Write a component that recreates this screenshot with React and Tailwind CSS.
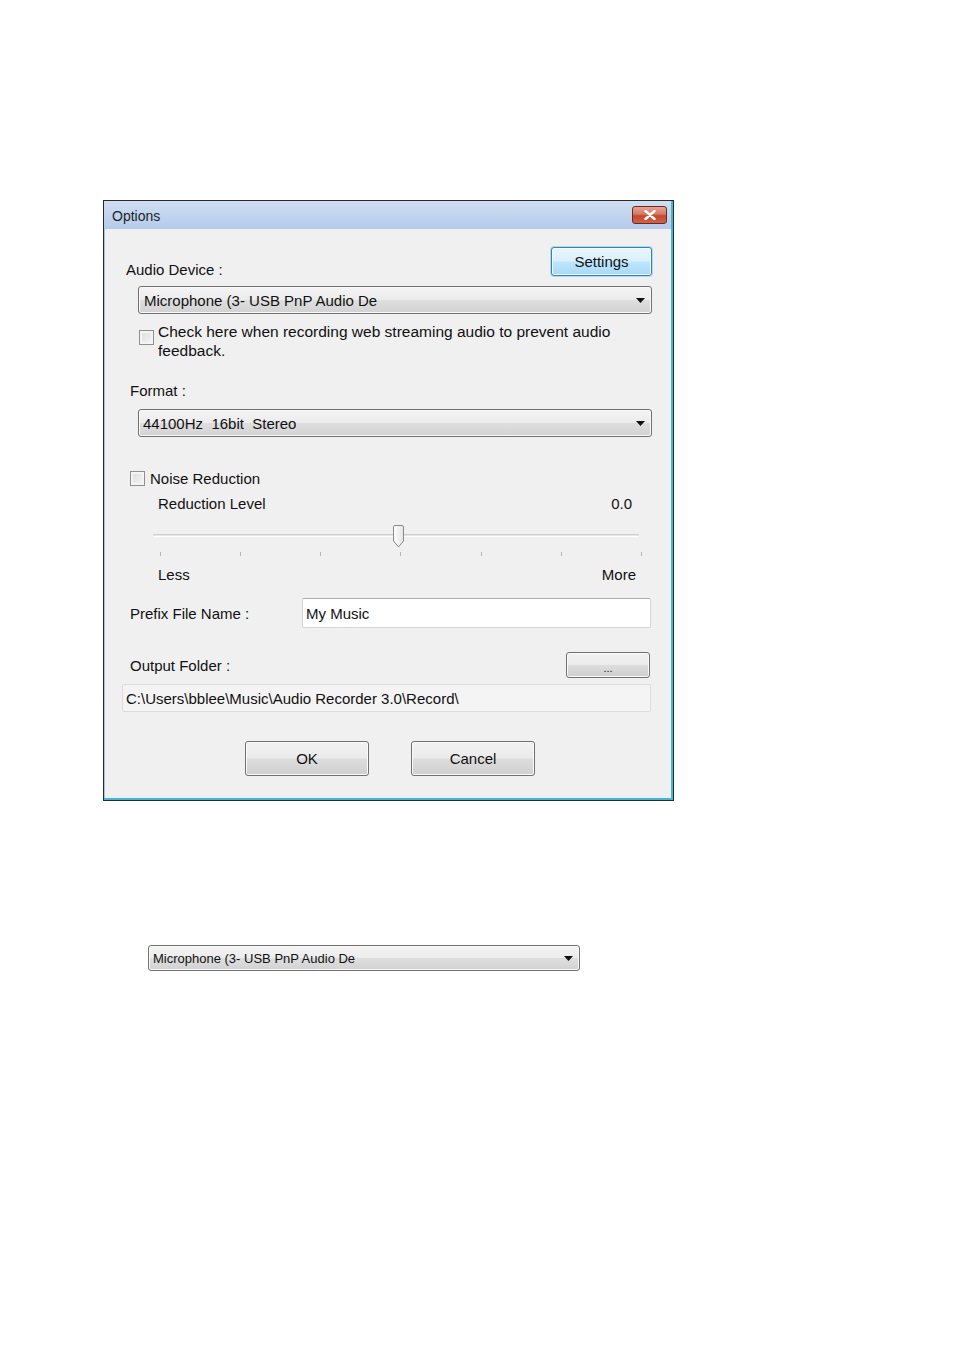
import React from "react";

const font = { fontFamily: '"Liberation Sans", Arial, sans-serif' };

function Arrow() {
  return (
    <svg width="9" height="5" viewBox="0 0 9 5" className="shrink-0">
      <path d="M0 0 H9 L4.5 5 Z" fill="#111" />
    </svg>
  );
}

function Combo({ text, className = "" }) {
  return (
    <div
      className={`flex items-center justify-between border border-[#707070] rounded-[3px] bg-[linear-gradient(to_bottom,#f4f4f4_0%,#ececec_48%,#dedede_52%,#d2d2d2_100%)] shadow-[inset_0_0_0_1px_#fafafa] ${className}`}
    >
      <span className="overflow-hidden whitespace-pre text-[#111]">{text}</span>
      <Arrow />
    </div>
  );
}

function Checkbox({ className = "" }) {
  return (
    <div className={`w-[15px] h-[15px] shrink-0 border border-[#8e8f8f] bg-[linear-gradient(135deg,#dcdcdc,#f6f6f6)] shadow-[inset_0_0_0_2px_#f4f4f4] ${className}`} />
  );
}

function Button({ children, className = "" }) {
  return (
    <div
      className={`flex items-center justify-center border border-[#707070] rounded-[3px] bg-[linear-gradient(to_bottom,#f2f2f2_0%,#ebebeb_48%,#dddddd_52%,#cfcfcf_100%)] shadow-[inset_0_0_0_1px_#fbfbfb] text-[#111] ${className}`}
    >
      {children}
    </div>
  );
}

function Thumb() {
  return (
    <svg width="13" height="23" viewBox="0 0 13 23">
      <defs>
        <linearGradient id="tg" x1="0" y1="0" x2="1" y2="0">
          <stop offset="0" stopColor="#ffffff" />
          <stop offset="1" stopColor="#e4e4e4" />
        </linearGradient>
      </defs>
      <path d="M1.5 2 Q1.5 0.5 3 0.5 H10 Q11.5 0.5 11.5 2 V16 L6.5 22 L1.5 16 Z" fill="url(#tg)" stroke="#8a8a8a" strokeWidth="1" />
    </svg>
  );
}

export default function App() {
  const ticks = [0, 1, 2, 3, 4, 5, 6];
  return (
    <div className="min-h-[1350px] w-[954px] bg-white text-[15px] leading-[19px]" style={font}>
      <div className="pt-[200px] pl-[103px]">
        {/* Window */}
        <div className="w-[571px] border border-[#2a2a2a] bg-[#a9c2e2]">
          <div className="border-r-2 border-b-2 border-[#40b5d8]">
            {/* Title bar */}
            <div className="h-[28px] flex items-center justify-between pl-[8px] pr-[4px] bg-[linear-gradient(to_bottom,#cfdff2,#b3cbea)]">
              <span className="pt-[2px] text-[14px] text-[#1e1e1e]">Options</span>
              <div className="w-[35px] h-[18px] rounded-[3px] border border-[#6b2a20] bg-[linear-gradient(to_bottom,#e8a394_0%,#d47862_45%,#c4472c_55%,#d0624a_100%)] flex items-center justify-center">
                <svg width="12" height="10" viewBox="0 0 12 10">
                  <path d="M1.5 1 L10.5 9 M10.5 1 L1.5 9" stroke="#ffffff" strokeWidth="2.4" strokeLinecap="round" />
                </svg>
              </div>
            </div>

            {/* Client */}
            <div className="bg-[#f0f0f0] pb-[22px] ml-[1px]">
              {/* Audio device */}
              <div className="pt-[18px] flex items-end justify-between pl-[21px] pr-[19px]">
                <span className="mb-[-3px] text-[#111]">Audio Device :</span>
                <div className="w-[101px] h-[29px] flex items-center justify-center rounded-[3px] border border-[#3c7fb1] bg-[linear-gradient(to_bottom,#eaf6fd_0%,#d9f0fc_48%,#bee6fd_52%,#a7d9f5_100%)] shadow-[0_0_0_1px_#a8dcf5,inset_0_0_0_1px_#f4fbff] text-[#111]">
                  Settings
                </div>
              </div>

              <Combo text="Microphone (3- USB PnP Audio De" className="mt-[10px] ml-[33px] mr-[19px] h-[28px] pl-[5px] pr-[6px]" />

              <div className="mt-[8px] ml-[34px] mr-[40px] flex gap-[4px]">
                <Checkbox className="mt-[8px]" />
                <span className="text-[15.5px] text-[#111]">Check here when recording web streaming audio to prevent audio feedback.</span>
              </div>

              <div className="mt-[21px] ml-[25px] text-[#111]">Format :</div>

              <Combo text="44100Hz  16bit  Stereo" className="mt-[9px] ml-[33px] mr-[19px] h-[28px] pl-[4px] pr-[6px]" />

              {/* Noise reduction */}
              <div className="mt-[32px] ml-[25px] flex items-center gap-[5px]">
                <Checkbox />
                <span className="text-[#111]">Noise Reduction</span>
              </div>
              <div className="mt-[6px] ml-[53px] mr-[39px] flex justify-between text-[#111]">
                <span>Reduction Level</span>
                <span>0.0</span>
              </div>

              {/* Slider */}
              <div className="relative mt-[12px] ml-[48px] mr-[32px] h-[36px]">
                <div className="absolute left-0 right-0 top-[9px] h-[3px] border-t border-[#cfcfcf] border-b border-b-white bg-[#e6e6e6]" />
                <div className="absolute left-[239px] top-0">
                  <Thumb />
                </div>
                <div className="absolute left-[7px] right-[-3px] top-[27px] flex justify-between">
                  {ticks.map((t) => (
                    <div key={t} className="w-px h-[4px] bg-[#b5b5b5]" />
                  ))}
                </div>
              </div>

              <div className="mt-[4px] ml-[53px] mr-[35px] flex justify-between text-[#111]">
                <span>Less</span>
                <span>More</span>
              </div>

              {/* Prefix */}
              <div className="mt-[14px] ml-[25px] mr-[20px] flex items-center">
                <span className="w-[172px] text-[#111]">Prefix File Name :</span>
                <div className="flex-1 h-[30px] flex items-center pl-[3px] bg-white border border-[#d5d5d5] border-t-[#abadb3] rounded-[2px] text-[#111]">
                  My Music
                </div>
              </div>

              {/* Output folder */}
              <div className="mt-[24px] ml-[25px] mr-[21px] flex items-center justify-between">
                <span className="pt-[1px] text-[#111]">Output Folder :</span>
                <Button className="w-[84px] h-[26px] text-[11px] pt-[6px]">...</Button>
              </div>
              <div className="mt-[6px] ml-[17px] mr-[20px] h-[28px] flex items-center pl-[3px] bg-[#f4f4f4] border border-[#dcdcdc] rounded-[2px] text-[#111]">
                C:\Users\bblee\Music\Audio Recorder 3.0\Record\
              </div>

              {/* Buttons */}
              <div className="mt-[29px] flex justify-center gap-[42px] pl-[4px]">
                <Button className="w-[124px] h-[35px]">OK</Button>
                <Button className="w-[124px] h-[35px]">Cancel</Button>
              </div>
            </div>
          </div>
        </div>
      </div>

      {/* Standalone combo */}
      <div className="mt-[144px] ml-[148px]">
        <Combo text="Microphone (3- USB PnP Audio De" className="w-[432px] h-[26px] pl-[4px] pr-[6px] text-[13px]" />
      </div>
    </div>
  );
}
